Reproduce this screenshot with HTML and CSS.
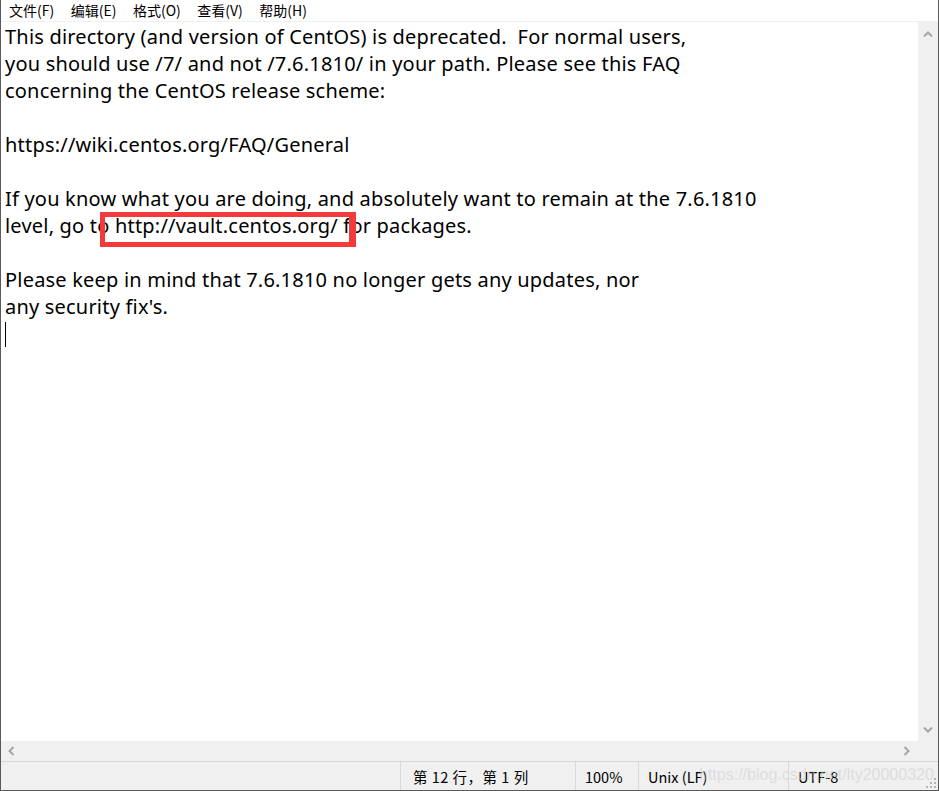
FILE: index.html
```html
<!DOCTYPE html>
<html lang="zh-CN">
<head>
    <meta charset="UTF-8">
    <meta name="viewport" content="width=device-width, initial-scale=1.0">
    <title>readme - 记事本</title>
    <link rel="stylesheet" href="styles.css">
</head>
<body>

<div class="window">
    <!-- Menu bar -->
    <nav class="menubar">
        <span class="menu-item">文件(F)</span>
        <span class="menu-item">编辑(E)</span>
        <span class="menu-item">格式(O)</span>
        <span class="menu-item">查看(V)</span>
        <span class="menu-item">帮助(H)</span>
    </nav>

    <!-- Editor + vertical scrollbar -->
    <div class="editor">
        <div class="text-area">
<pre class="doc">This directory (and version of CentOS) is deprecated.  For normal users,
you should use /7/ and not /7.6.1810/ in your path. Please see this FAQ
concerning the CentOS release scheme:

https://wiki.centos.org/FAQ/General

If you know what you are doing, and absolutely want to remain at the 7.6.1810
level, go to http://vault.centos.org/ for packages.

Please keep in mind that 7.6.1810 no longer gets any updates, nor
any security fix's.
<span class="caret"></span></pre>
            <div class="highlight"></div>
        </div>
        <div class="vscroll">
            <svg class="arrow" width="10" height="6" viewBox="0 0 10 6"><path d="M1 5.5 L5 1.5 L9 5.5" fill="none" stroke="#a6a6a6" stroke-width="2"/></svg>
            <svg class="arrow" width="10" height="6" viewBox="0 0 10 6"><path d="M1 0.5 L5 4.5 L9 0.5" fill="none" stroke="#a6a6a6" stroke-width="2"/></svg>
        </div>
    </div>

    <!-- Horizontal scrollbar -->
    <div class="hscroll-row">
        <div class="hscroll">
            <svg class="arrow" width="6" height="10" viewBox="0 0 6 10"><path d="M5.5 1 L1.5 5 L5.5 9" fill="none" stroke="#a6a6a6" stroke-width="2"/></svg>
            <svg class="arrow" width="6" height="10" viewBox="0 0 6 10"><path d="M0.5 1 L4.5 5 L0.5 9" fill="none" stroke="#a6a6a6" stroke-width="2"/></svg>
        </div>
        <div class="corner"></div>
    </div>

    <!-- Status bar -->
    <div class="statusbar">
        <div class="cell cell-blank"></div>
        <div class="cell cell-pos">第 12 行，第 1 列</div>
        <div class="cell cell-zoom">100%</div>
        <div class="cell cell-eol">Unix (LF)</div>
        <div class="cell cell-enc">UTF-8</div>
        <span class="watermark">https://blog.csdn.net/lty20000320</span>
        <svg class="grip" width="11" height="11" viewBox="0 0 11 11">
            <rect x="8" y="0" width="2" height="2" fill="#b5b5b5"/>
            <rect x="4" y="4" width="2" height="2" fill="#b5b5b5"/>
            <rect x="8" y="4" width="2" height="2" fill="#b5b5b5"/>
            <rect x="0" y="8" width="2" height="2" fill="#b5b5b5"/>
            <rect x="4" y="8" width="2" height="2" fill="#b5b5b5"/>
            <rect x="8" y="8" width="2" height="2" fill="#b5b5b5"/>
        </svg>
    </div>
</div>

</body>
</html>
```

FILE: styles.css
```css
/* Page */
body {
    margin: 0;
    background: #ffffff;
    font-family: 'Noto Sans', 'Noto Sans CJK SC', sans-serif;
}

/* Notepad Window */
.window {
    width: 939px;
    height: 791px;
    box-sizing: border-box;
    border-left: 1px solid #5a5a5a;
    border-right: 1px solid #5a5a5a;
    border-bottom: 1px solid #5a5a5a;
    display: flex;
    flex-direction: column;
    overflow: hidden;
}

/* Menu Bar */
.menubar {
    height: 21px;
    border-bottom: 1px solid #f0f0f0;
    display: flex;
    align-items: center;
    padding-left: 0;
    font-family: 'Noto Sans CJK SC', sans-serif;
    font-size: 14px;
    color: #000;
}
.menu-item {
    padding: 0 8.5px 0 8px;
    line-height: 21px;
}

/* Editor */
.editor {
    height: 719px;
    display: flex;
}
.text-area {
    flex: 1;
    position: relative;
    background: #fff;
    overflow: hidden;
}
.doc {
    margin: 0;
    padding: 1px 0 0 4px;
    font-family: 'Noto Sans', 'Noto Sans CJK SC', sans-serif;
    font-size: 20px;
    letter-spacing: 0.2px;
    line-height: 27px;
    color: #000;
    white-space: pre;
}
.caret {
    display: inline-block;
    width: 1px;
    height: 25px;
    background: #000;
    vertical-align: -6px;
}

/* Red annotation box */
.highlight {
    position: absolute;
    left: 99px;
    top: 190px;
    width: 244px;
    height: 25px;
    border: 5px solid #f43a3a;
    border-right-width: 7px;
    background: transparent;
}

/* Scrollbars */
.vscroll {
    width: 20px;
    background: #f0f0f0;
    display: flex;
    flex-direction: column;
    justify-content: space-between;
    align-items: center;
    padding: 9px 0 8px;
    box-sizing: border-box;
}
.hscroll-row {
    height: 20px;
    display: flex;
}
.hscroll {
    flex: 1;
    background: #f0f0f0;
    display: flex;
    justify-content: space-between;
    align-items: center;
    padding: 0 8px 0 7px;
}
.corner {
    width: 20px;
    background: #f0f0f0;
}
.arrow {
    display: block;
}

/* Status Bar */
.statusbar {
    height: 28px;
    border-top: 1px solid #d7d7d7;
    background: #f0f0f0;
    display: flex;
    position: relative;
    font-family: 'Noto Sans CJK SC', sans-serif;
    font-size: 14.5px;
    color: #000;
}
.cell {
    display: flex;
    align-items: center;
    padding-left: 10px;
    box-sizing: border-box;
    border-left: 1px solid #d9d9d9;
}
.cell-blank {
    flex: 1;
    border-left: none;
}
.cell-pos { width: 175px; padding-left: 12px; letter-spacing: 0.5px; }
.cell-zoom { width: 63px; padding-left: 9px; }
.cell-eol { width: 150px; padding-left: 9px; }
.cell-enc { width: 150px; padding-left: 9px; }

/* Watermark */
.watermark {
    position: absolute;
    left: 698px;
    top: 1px;
    font-family: 'Liberation Sans', sans-serif;
    font-size: 16px;
    line-height: 24px;
    color: rgba(205, 205, 205, 0.55);
}

/* Size grip */
.grip {
    position: absolute;
    right: 1px;
    bottom: 1px;
}
```
